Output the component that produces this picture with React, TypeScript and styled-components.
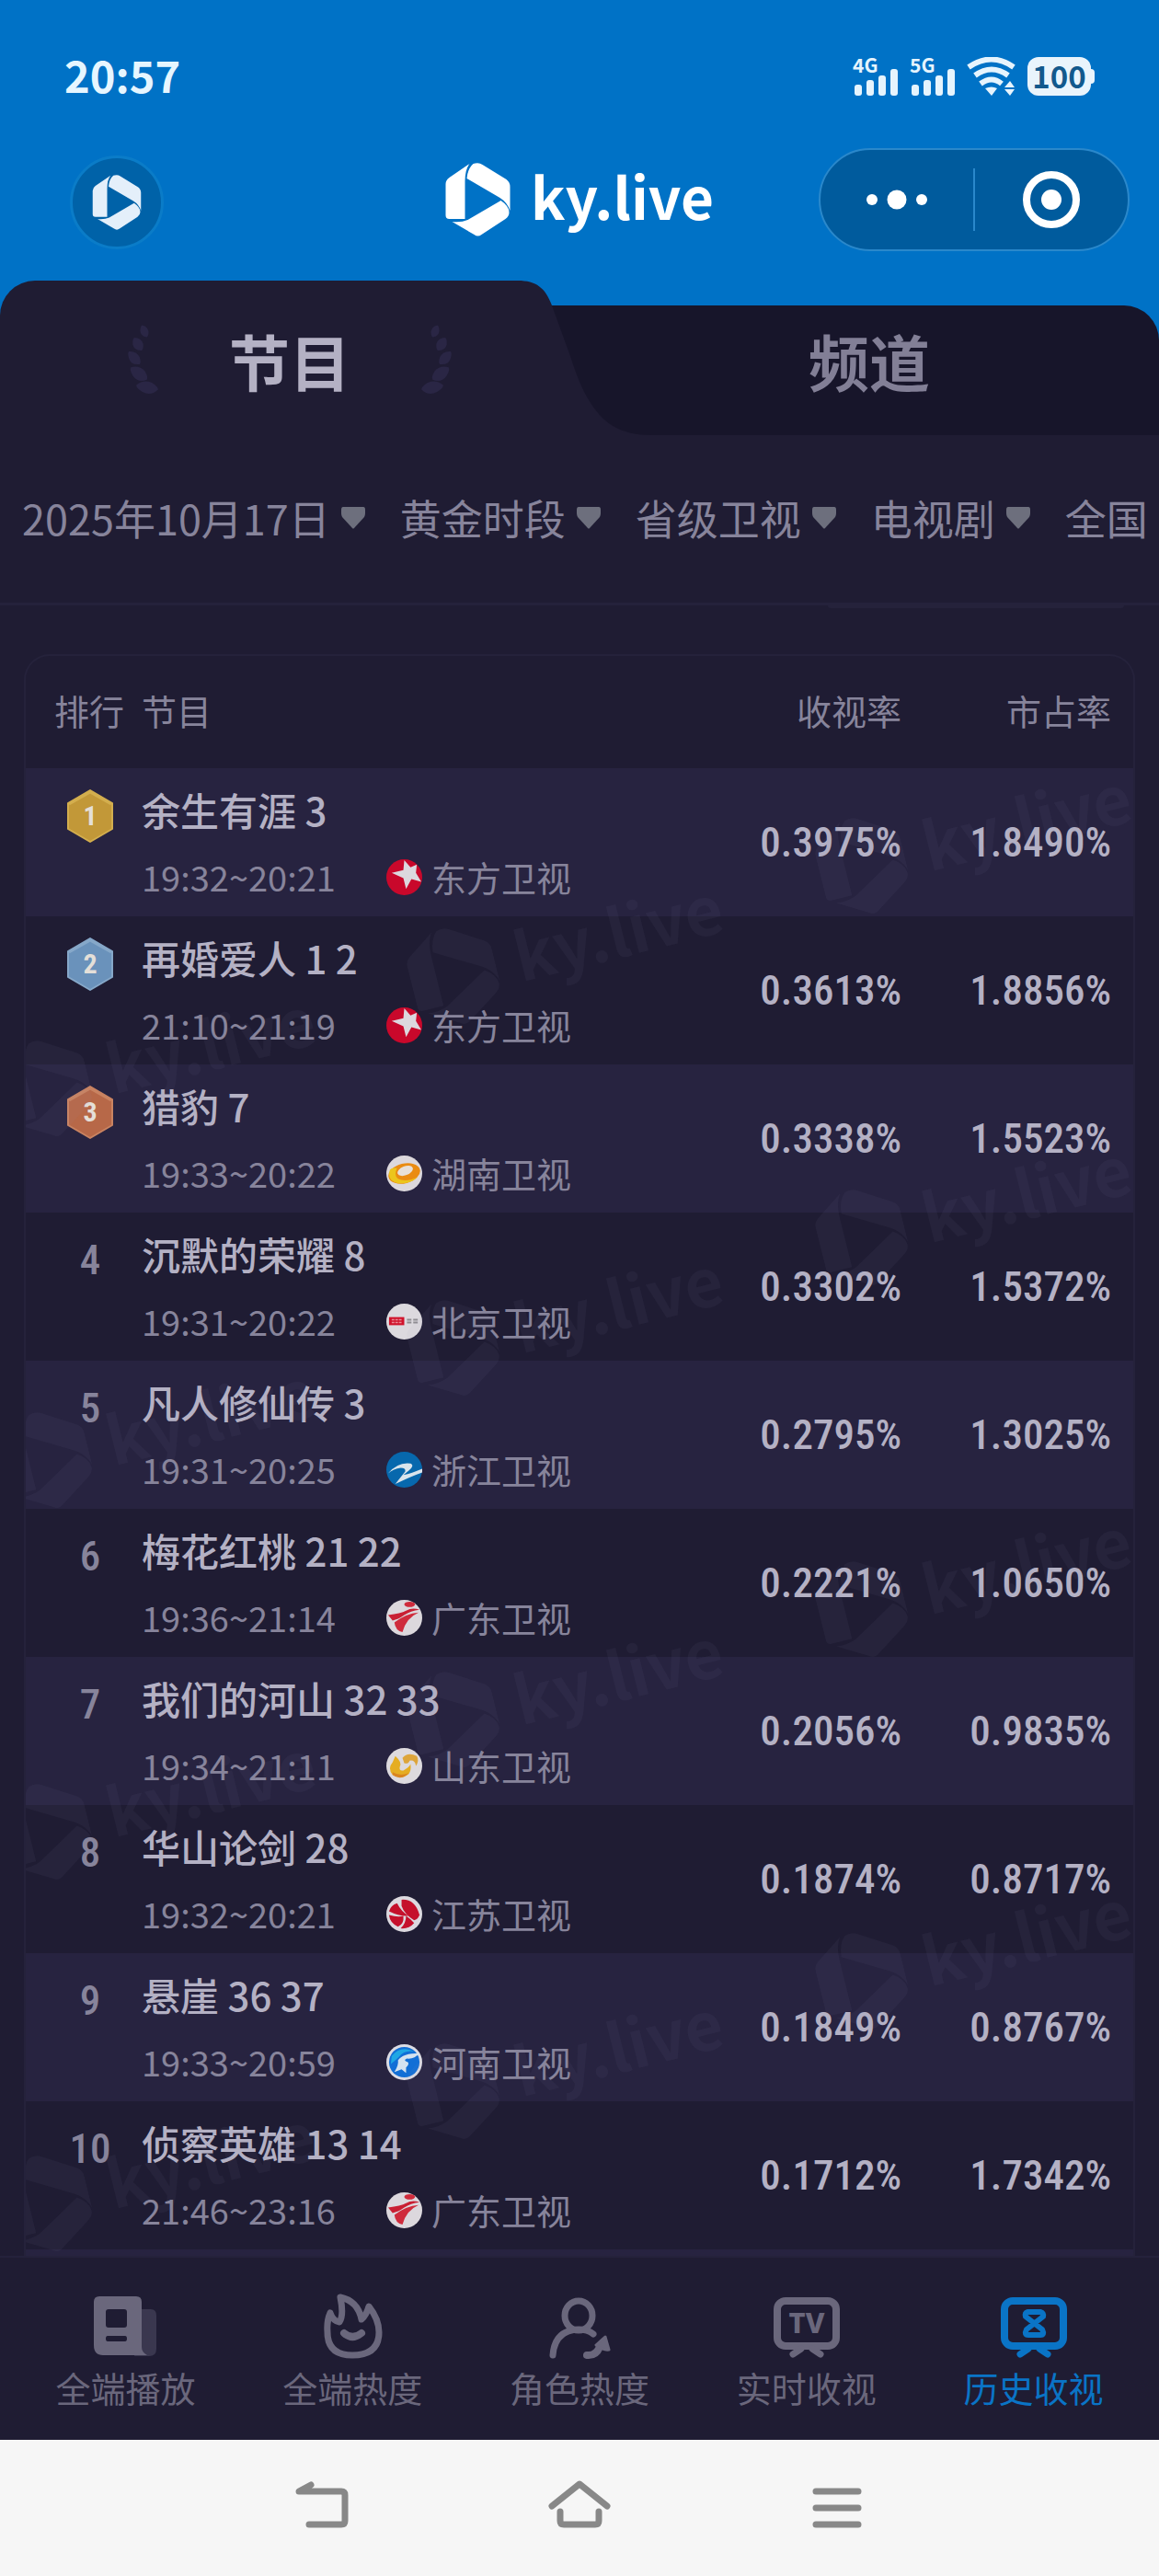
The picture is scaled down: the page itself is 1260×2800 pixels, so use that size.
import React from "react";
import styled, { createGlobalStyle, css } from "styled-components";

const c = {
  blue: "#0072c6",
  ink: "#1f1c33",
  inkDeep: "#17152a",
  stripe: "#272340",
  line: "#25223b",
  bright: "#b4b1c4",
  muted: "#87849b",
  dim: "#6a677c",
};

const sans = `"Noto Sans CJK SC", "Noto Sans", sans-serif`;
const narrow = `"Roboto Condensed", "Liberation Sans Narrow", Roboto, "Noto Sans CJK SC", sans-serif`;

const Global = createGlobalStyle`
  * { box-sizing: border-box; }
  body { margin: 0; background: ${c.ink}; font-family: ${sans}; }
  button, select { font: inherit; color: inherit; border: 0; background: none; padding: 0; margin: 0; }
  a { color: inherit; text-decoration: none; }
`;

const Page = styled.div`
  display: flex;
  flex-direction: column;
  min-height: 100vh;
  background: ${c.ink};
  overflow: hidden;
`;

const Top = styled.header`
  background: ${c.blue};
  color: #fff;
`;

const StatusBar = styled.div`
  display: flex;
  justify-content: space-between;
  align-items: center;
  height: 161px;
  padding: 4px 70px 0;
`;

const Clock = styled.time`
  padding-bottom: 4px;
  font-size: 47px;
  line-height: 56px;
  font-weight: 700;
  color: #e6f6ff;
`;

const StatusIcons = styled.div`
  display: flex;
  gap: 12px;
  color: #e6f4fd;
`;

const Signal = styled.div`
  position: relative;
  width: 50px;
  height: 42px;
`;

const SignalLabel = styled.span`
  position: absolute;
  left: 0;
  top: -4px;
  font-size: 21px;
  line-height: 24px;
  font-weight: 700;
`;

const BatteryBody = styled.div`
  display: flex;
  align-items: center;
`;

const BatteryCell = styled.span`
  width: 69px;
  height: 42px;
  border-radius: 12px;
  background: #e9f4fc;
  color: #12598d;
  font-size: 33px;
  line-height: 40px;
  font-weight: 700;
  text-align: center;
`;

const BatteryTip = styled.span`
  width: 4px;
  height: 16px;
  border-radius: 0 4px 4px 0;
  background: #e9f4fc;
`;

const TitleRow = styled.div`
  display: grid;
  grid-template-columns: 1fr auto 1fr;
  align-items: center;
  height: 144px;
  padding: 0 32px 32px;
`;

const HomeButton = styled.button`
  display: flex;
  align-items: center;
  justify-content: center;
  width: 102px;
  height: 102px;
  margin: 6px 0 0 44px;
  border: 3px solid #0a7cc8;
  border-radius: 50%;
  background: #0062a8;
  color: #e4effa;
`;

const Brand = styled.div`
  display: flex;
  align-items: center;
  gap: 22px;
  height: 112px;
`;

const BrandName = styled.h1`
  margin: 0;
  padding-bottom: 10px;
  font-size: 62px;
  line-height: 72px;
  font-weight: 700;
`;

const Capsule = styled.div`
  display: flex;
  align-items: center;
  justify-self: end;
  width: 338px;
  height: 112px;
  border: 2px solid #2a88cb;
  border-radius: 56px;
  background: #005b9d;
`;

const CapsuleButton = styled.button`
  flex: 1;
  display: flex;
  align-items: center;
  justify-content: center;
  height: 100%;
  color: #fff;
`;

const CapsuleRule = styled.span`
  width: 2px;
  height: 68px;
  background: #2a88cb;
`;

const Tabs = styled.nav`
  position: relative;
  display: grid;
  grid-template-columns: 1fr 1fr;
  height: 168px;
`;

const TabShape = styled.div`
  position: absolute;
  inset: 0;
  display: flex;
  align-items: flex-end;
`;

const TabShapeLeft = styled.span`
  flex: 0 0 calc(50% - 67px);
  height: 168px;
  border-radius: 38px 0 0 0;
  background: ${c.ink};
`;

const TabShapeRight = styled.span`
  flex: 1;
  height: 141px;
  border-radius: 0 38px 0 0;
  background: ${c.inkDeep};
`;

const Tab = styled.button<{ $active?: boolean }>`
  position: relative;
  display: flex;
  align-items: center;
  justify-content: center;
  gap: 74px;
  padding-top: 4px;
  font-size: 66px;
  line-height: 80px;
  font-weight: 700;
  color: ${(p) => (p.$active ? c.bright : "#827f96")};
`;

const Filters = styled.form`
  display: flex;
  align-items: center;
  gap: 38px;
  height: 182px;
  padding: 0 24px 2px;
  overflow: hidden;
`;

const Filter = styled.label`
  display: flex;
  flex: none;
  align-items: center;
  gap: 12px;
  color: ${c.muted};
`;

const FilterSelect = styled.select`
  appearance: none;
  field-sizing: content;
  font-size: 45px;
  line-height: 60px;
  outline: none;
`;

const Divider = styled.hr`
  width: 100%;
  height: 3px;
  margin: 0;
  border: 0;
  background: ${c.line};
`;

const PanelEdge = styled.div`
  align-self: flex-end;
  width: 322px;
  height: 3px;
  margin-right: 38px;
  border-radius: 0 0 3px 3px;
  background: ${c.line};
`;

const Card = styled.section`
  position: relative;
  margin: 50px 26px 0;
  border: 2px solid ${c.line};
  border-bottom: 0;
  border-radius: 28px 28px 0 0;
  overflow: hidden;
`;

const Table = styled.table`
  width: 100%;
  table-layout: fixed;
  border-collapse: collapse;
`;

const Head = styled.th<{ $align?: string; $w?: number }>`
  height: 122px;
  width: ${(p) => (p.$w ? p.$w + "px" : "auto")};
  padding: 0 0 4px;
  text-align: ${(p) => p.$align || "left"};
  font-size: 38px;
  line-height: 52px;
  font-weight: 400;
  color: ${c.muted};
  &:first-child { padding-left: 12px; }
  &:last-child { padding-right: 24px; }
`;

const Row = styled.tr`
  height: 161px;
  background: ${c.ink};
  &:nth-child(odd) { background: ${c.stripe}; }
`;

const RankCell = styled.td`
  padding: 23px 0 0 14px;
  vertical-align: top;
`;

const Rank = styled.span`
  display: flex;
  align-items: center;
  justify-content: center;
  height: 58px;
  font-family: ${narrow};
  font-size: 45px;
  line-height: 52px;
  font-weight: 500;
  color: ${c.muted};
`;

const Medal = styled.span`
  display: grid;
  place-items: center;
  height: 58px;
  & > * { grid-area: 1 / 1; }
`;

const MedalNumber = styled.span`
  font-family: ${narrow};
  font-size: 30px;
  line-height: 32px;
  font-weight: 700;
  color: #e4dfd8;
`;

const ProgramCell = styled.td`
  padding: 19px 0 0;
  vertical-align: top;
`;

const ProgramName = styled.div`
  font-size: 42px;
  line-height: 52px;
  font-weight: 500;
  color: ${c.bright};
`;

const Meta = styled.div`
  display: flex;
  align-items: center;
  margin-top: 21px;
  font-size: 38px;
  line-height: 52px;
  color: ${c.muted};
`;

const Slot = styled.span`
  width: 266px;
`;

const Channel = styled.span`
  display: flex;
  align-items: center;
  gap: 10px;
`;

const Figure = styled.td<{ $last?: boolean }>`
  padding: 0 ${(p) => (p.$last ? 24 : 0)}px 0 0;
  text-align: right;
  font-family: ${narrow};
  font-size: 45px;
  line-height: 56px;
  font-weight: 500;
  color: ${c.bright};
`;

const Peek = styled.div`
  height: 7px;
  background: ${c.stripe};
`;

const Marks = styled.div`
  position: absolute;
  inset: 122px 0 0;
  overflow: hidden;
  pointer-events: none;
`;

const MarkColumn = styled.div<{ $x: number; $y: number }>`
  position: absolute;
  left: ${(p) => p.$x}px;
  top: ${(p) => p.$y}px;
  display: flex;
  flex-direction: column;
  gap: 292px;
`;

const Mark = styled.div`
  display: flex;
  align-items: center;
  gap: 22px;
  width: 344px;
  height: 112px;
  transform: rotate(-14deg);
  color: rgba(150, 160, 190, 0.06);
`;

const MarkText = styled.span`
  padding-bottom: 14px;
  font-size: 72px;
  line-height: 80px;
  font-weight: 700;
`;

const BottomNav = styled.nav`
  display: grid;
  grid-template-columns: repeat(5, 1fr);
  height: 200px;
  padding: 39px 13px 0;
  border-top: 2px solid ${c.line};
`;

const NavLink = styled.a<{ $active?: boolean }>`
  display: flex;
  flex-direction: column;
  align-items: center;
  gap: 6px;
  font-size: 38px;
  line-height: 48px;
  color: ${(p) => (p.$active ? "#0a74c6" : c.dim)};
`;

const SystemBar = styled.footer`
  display: flex;
  justify-content: center;
  gap: 208px;
  flex: 1;
  min-height: 147px;
  padding-top: 35px;
  background: #f6f6f6;
`;

const SystemButton = styled.button`
  width: 72px;
  height: 72px;
  color: #888;
`;

const block = css`
  display: block;
  flex: none;
`;
const Svg = styled.svg`
  ${block}
`;

function KyLogo({ w, h }: { w: number; h: number }) {
  return (
    <Svg width={w} height={h} viewBox="0 0 70 80" fill="currentColor" aria-hidden="true">
      <path d="M26 1 L4 16 Q0 19 0 23 V57 Q0 61 4 61 L21 61 V20 Q21 7 26 1Z" />
      <path d="M30 1 Q36 -1 40 2 L66 18 Q70 21 70 26 V52 Q67 43 59 38 L23 17 Q24 6 30 1Z" />
      <path d="M60 41 Q69 47 69 54 Q69 58 65 61 L39 78 Q35 81 31 78 L7 64 Q17 65 24 62Z" />
    </Svg>
  );
}

function SignalMeter({ label }: { label: string }) {
  return (
    <Signal>
      <SignalLabel>{label}</SignalLabel>
      <Svg width="50" height="42" viewBox="0 0 50 42" fill="currentColor" aria-hidden="true">
        <rect x="2" y="30" width="8" height="12" rx="3" />
        <rect x="15" y="25" width="8" height="17" rx="3" />
        <rect x="28" y="20" width="8" height="22" rx="3" />
        <rect x="41" y="13" width="8" height="29" rx="3" />
      </Svg>
    </Signal>
  );
}

function Laurel({ flip }: { flip?: boolean }) {
  const leaves = [
    [18, 8, 70, 7, 4],
    [11, 22, 60, 8, 5],
    [7, 37, 50, 9, 5],
    [12, 54, 38, 11, 6],
    [21, 69, 12, 12, 6],
  ];
  return (
    <Svg width="36" height="78" viewBox="0 0 36 78" fill="#2a2645" aria-hidden="true">
      <g transform={flip ? "translate(36 0) scale(-1 1)" : undefined}>
        {leaves.map(([x, y, r, a, b]) => (
          <path
            key={y}
            transform={`translate(${x} ${y}) rotate(${r})`}
            d={`M${-a} 0 Q${-a / 2} ${-b * 1.3} ${a / 3} ${-b} Q${a} ${-b / 2} ${a} 0 Q${a / 2} ${b * 1.5} ${-a / 3} ${b} Q${-a} ${b / 2} ${-a} 0Z`}
          />
        ))}
      </g>
    </Svg>
  );
}

const medalColors = [
  ["#c29838", "#d3ae4e"],
  ["#6a92bb", "#86a8c9"],
  ["#b76848", "#c98361"],
];

function RankBadge({ n }: { n: number }) {
  if (n > 3) return <Rank>{n}</Rank>;
  const [fill, edge] = medalColors[n - 1];
  return (
    <Medal>
      <Svg width="50" height="58" viewBox="0 0 50 58" aria-hidden="true">
        <path d="M25 1 L49 15 V43 L25 57 L1 43 V15Z" fill={fill} stroke={edge} strokeWidth="2" strokeLinejoin="round" />
        <path d="M2 16 L25 3 L48 16" fill="none" stroke={edge} strokeWidth="3" />
      </Svg>
      <MedalNumber>{n}</MedalNumber>
    </Medal>
  );
}

function ChannelLogo({ name }: { name: string }) {
  const art: Record<string, React.ReactNode> = {
    东方卫视: (
      <>
        <circle cx="20" cy="20" r="20" fill="#c9082b" />
        <path d="M20 1 L27 9 L34 6 L33 15 L39 25 L28 22 L22 33 L19 21 L6 15 L19 12Z" fill="#dcd8de" />
      </>
    ),
    湖南卫视: (
      <>
        <circle cx="20" cy="20" r="20" fill="#dcd8dc" />
        <ellipse cx="20" cy="20" rx="18" ry="11" transform="rotate(-14 20 20)" fill="#ea8c12" />
        <path d="M4 16 Q0 28 13 31 Q26 32 35 24 Q22 30 13 26 Q8 22 12 14 Q6 13 4 16Z" fill="#ecc51c" />
        <ellipse cx="21" cy="17" rx="9" ry="5" transform="rotate(-22 21 17)" fill="#e8e0d8" />
      </>
    ),
    北京卫视: (
      <>
        <circle cx="20" cy="20" r="20" fill="#dcd9de" />
        <rect x="3" y="15" width="17" height="9" fill="#d0132c" />
        <path d="M6 18 H17 M6 21 H17" stroke="#e88994" strokeWidth="1.5" strokeDasharray="3 1" />
        <path d="M23 18 H36 M23 21 H36" stroke="#8f8d92" strokeWidth="2" strokeDasharray="5 2" />
      </>
    ),
    浙江卫视: (
      <>
        <circle cx="20" cy="20" r="20" fill="#0768ad" />
        <path d="M2 24 Q13 11 27 13 Q32 15 25 21 L19 26 Q28 24 40 19 L40 23 Q26 28 10 36 L21 22 Q22 18 16 18 Q8 19 2 24Z" fill="#d9e4ec" />
      </>
    ),
    广东卫视: (
      <>
        <circle cx="20" cy="20" r="20" fill="#dcd8dd" />
        <ellipse cx="26" cy="5" rx="6" ry="3" fill="#cf2b3c" />
        <path d="M2 17 Q16 15 22 12 Q29 8 37 11 Q27 12 20 17 Q13 22 7 23Z" fill="#c91f33" />
        <path d="M9 25 Q22 15 36 14 Q22 20 18 36 Q10 34 9 25Z" fill="#cf2b3c" />
      </>
    ),
    山东卫视: (
      <>
        <circle cx="20" cy="20" r="20" fill="#dddade" />
        <path d="M10 9 Q18 16 15 21 Q14 26 19 25 Q25 22 27 18 Q28 25 25 29 Q17 36 7 30 Q1 23 7 16Z" fill="#e5ad22" />
        <path d="M18 11 Q24 4 34 9 Q37 14 33 20 Q32 13 26 14 Q25 18 20 17Z" fill="#dda53a" />
        <path d="M7 27 Q15 32 25 28 Q16 37 7 30Z" fill="#d98420" />
      </>
    ),
    江苏卫视: (
      <>
        <circle cx="20" cy="20" r="20" fill="#dcd9df" />
        <path d="M17 4 Q32 3 37 21 Q35 26 31 27 Q20 20 17 11Z" fill="#c5102b" />
        <path d="M12 8 Q17 18 25 22 Q15 23 3 17 Q5 10 12 8Z" fill="#c5102b" />
        <path d="M3 21 Q13 24 19 22 Q20 31 13 34 Q4 30 3 21Z" fill="#c5102b" />
        <path d="M22 22 Q28 26 31 30 Q25 37 16 36 Q22 30 22 22Z" fill="#c5102b" />
      </>
    ),
    河南卫视: (
      <>
        <circle cx="20" cy="20" r="20" fill="#dcdce4" />
        <circle cx="20" cy="20" r="17" fill="#126fd6" />
        <path d="M6 13 Q16 1 31 8 Q20 6 14 14 Q9 19 5 22Z" fill="#1fa7e4" />
        <path d="M9 31 Q14 23 13 18 Q18 10 37 10 Q31 17 23 16 Q18 18 24 20 Q26 22 22 26 V32 L17 28Z" fill="#d5e3f0" />
      </>
    ),
  };
  return (
    <Svg width="39" height="39" viewBox="0 0 40 40" aria-hidden="true">
      {art[name]}
    </Svg>
  );
}

const stroke = { fill: "none", stroke: "currentColor", strokeLinecap: "round", strokeLinejoin: "round" } as const;

const navIcons: Record<string, React.ReactNode> = {
  全端播放: (
    <>
      <path d="M52 17 H64 Q70 17 70 24 V60 Q70 68 62 68 H46Z" fill="#3a374f" />
      <path fillRule="evenodd" fill="currentColor" d="M8 3 H48 Q54 3 54 9 V58 Q54 64 60 67 H12 Q2 67 2 56 V9 Q2 3 8 3Z M18 17 Q15 17 15 20 V34 Q15 37 18 37 H35 Q38 37 38 34 V20 Q38 17 35 17Z M17 46 Q15 46 15 49 Q15 52 17 52 H36 Q38 52 38 49 Q38 46 36 46Z" />
    </>
  ),
  全端热度: (
    <g {...stroke}>
      <path strokeWidth="7" d="M12 21 Q15 30 22 31 Q27 24 23 4 Q42 8 46 28 Q51 24 54 14 Q65 28 65 42 Q65 67 36 67 Q9 67 9 42 Q8 30 12 21Z" />
      <path strokeWidth="8" d="M27 43 Q36 51 46 43" />
    </g>
  ),
  角色热度: (
    <>
      <g {...stroke} strokeWidth="7">
        <ellipse cx="35" cy="24" rx="15" ry="16" />
        <path d="M7 67 Q9 40 35 39 Q45 39 51 44" />
        <path strokeWidth="8" d="M44 67 Q54 68 58 58" />
      </g>
      <path d="M64 47 L68 61 Q62 62 54 56Z" fill="currentColor" stroke="currentColor" strokeWidth="3" strokeLinejoin="round" />
    </>
  ),
  实时收视: (
    <>
      <g {...stroke} strokeWidth="8">
        <rect x="4" y="8" width="64" height="49" rx="9" />
        <path d="M30 60 L21 66 M42 60 L51 66" strokeWidth="7" />
      </g>
      <text x="36" y="43" textAnchor="middle" fontFamily="Noto Sans, sans-serif" fontWeight="800" fontSize="31" fill="currentColor">
        TV
      </text>
    </>
  ),
  历史收视: (
    <g {...stroke} strokeWidth="8">
      <rect x="4" y="8" width="64" height="49" rx="9" />
      <path d="M30 60 L21 66 M42 60 L51 66" strokeWidth="7" />
      <path strokeWidth="6" d="M29 20 H43 Q47 21 46 25 L28 39 Q25 45 30 45 H43 Q48 45 45 39 L27 25 Q26 21 29 20Z" />
    </g>
  ),
};

const filters = ["2025年10月17日", "黄金时段", "省级卫视", "电视剧", "全国"];

const programs = [
  ["余生有涯 3", "19:32~20:21", "东方卫视", "0.3975%", "1.8490%"],
  ["再婚爱人 1 2", "21:10~21:19", "东方卫视", "0.3613%", "1.8856%"],
  ["猎豹 7", "19:33~20:22", "湖南卫视", "0.3338%", "1.5523%"],
  ["沉默的荣耀 8", "19:31~20:22", "北京卫视", "0.3302%", "1.5372%"],
  ["凡人修仙传 3", "19:31~20:25", "浙江卫视", "0.2795%", "1.3025%"],
  ["梅花红桃 21 22", "19:36~21:14", "广东卫视", "0.2221%", "1.0650%"],
  ["我们的河山 32 33", "19:34~21:11", "山东卫视", "0.2056%", "0.9835%"],
  ["华山论剑 28", "19:32~20:21", "江苏卫视", "0.1874%", "0.8717%"],
  ["悬崖 36 37", "19:33~20:59", "河南卫视", "0.1849%", "0.8767%"],
  ["侦察英雄 13 14", "21:46~23:16", "广东卫视", "0.1712%", "1.7342%"],
];

const markColumns = [
  [-28, 262],
  [415, 140],
  [859, 20],
];

export default function App() {
  return (
    <Page>
      <Global />
      <Top>
        <StatusBar>
          <Clock>20:57</Clock>
          <StatusIcons>
            <SignalMeter label="4G" />
            <SignalMeter label="5G" />
            <Svg width="54" height="42" viewBox="0 0 54 42" aria-hidden="true">
              <g {...stroke} strokeLinecap="butt" strokeWidth="6">
                <path d="M2 11 Q27 -6 51 11" />
                <path d="M9 20 Q27 7 45 20" />
                <path d="M15 29 Q27 20 38 29" />
              </g>
              <path d="M27 42 L20 34 Q27 31 33 34Z M47 26 L52 33 H41Z M47 42 L52 35 H41Z" fill="currentColor" />
            </Svg>
            <BatteryBody>
              <BatteryCell>100</BatteryCell>
              <BatteryTip />
            </BatteryBody>
          </StatusIcons>
        </StatusBar>
        <TitleRow>
          <HomeButton aria-label="ky">
            <KyLogo w={54} h={60} />
          </HomeButton>
          <Brand>
            <KyLogo w={71} h={80} />
            <BrandName>ky.live</BrandName>
          </Brand>
          <Capsule>
            <CapsuleButton aria-label="更多">
              <Svg width="66" height="22" viewBox="0 0 66 22" fill="currentColor">
                <circle cx="6" cy="11" r="6" />
                <circle cx="33" cy="11" r="10.5" />
                <circle cx="60" cy="11" r="6" />
              </Svg>
            </CapsuleButton>
            <CapsuleRule />
            <CapsuleButton aria-label="关闭">
              <Svg width="62" height="62" viewBox="0 0 62 62" fill="currentColor">
                <circle cx="31" cy="31" r="27" fill="none" stroke="currentColor" strokeWidth="8" />
                <circle cx="31" cy="31" r="11" />
              </Svg>
            </CapsuleButton>
          </Capsule>
        </TitleRow>
        <Tabs>
          <TabShape>
            <TabShapeLeft />
            <Svg width="146" height="168" viewBox="0 0 146 168" aria-hidden="true">
              <path d="M0 27 H146 V168 H0Z" fill={c.inkDeep} />
              <path d="M0 0 C20 0 30 8 37 27 L57 82 C64 104 70 118 76 128 C92 156 112 168 146 168 H0Z" fill={c.ink} />
            </Svg>
            <TabShapeRight />
          </TabShape>
          <Tab $active>
            <Laurel />
            节目
            <Laurel flip />
          </Tab>
          <Tab>频道</Tab>
        </Tabs>
      </Top>

      <Filters>
        {filters.map((f) => (
          <Filter key={f}>
            <FilterSelect aria-label={f}>
              <option>{f}</option>
            </FilterSelect>
            <Svg width="26" height="24" viewBox="0 0 26 24" aria-hidden="true">
              <path d="M2 0 H24 Q26 0 26 3 V7 Q26 9 25 11 L14 23 Q13 24 12 23 L1 11 Q0 9 0 7 V3 Q0 0 2 0Z" fill="#6d6f7d" />
            </Svg>
          </Filter>
        ))}
      </Filters>
      <Divider />
      <PanelEdge />

      <Card>
        <Table>
          <thead>
            <tr>
              <Head $w={126} $align="center">排行</Head>
              <Head>节目</Head>
              <Head $w={252} $align="right">收视率</Head>
              <Head $w={252} $align="right">市占率</Head>
            </tr>
          </thead>
          <tbody>
            {programs.map(([name, time, channel, rate, share], i) => (
              <Row key={name}>
                <RankCell>
                  <RankBadge n={i + 1} />
                </RankCell>
                <ProgramCell>
                  <ProgramName>{name}</ProgramName>
                  <Meta>
                    <Slot>{time}</Slot>
                    <Channel>
                      <ChannelLogo name={channel} />
                      {channel}
                    </Channel>
                  </Meta>
                </ProgramCell>
                <Figure>{rate}</Figure>
                <Figure $last>{share}</Figure>
              </Row>
            ))}
          </tbody>
        </Table>
        <Peek />
        <Marks aria-hidden="true">
          {markColumns.map(([x, y]) => (
            <MarkColumn key={x} $x={x} $y={y}>
              {[0, 1, 2, 3].map((n) => (
                <Mark key={n}>
                  <KyLogo w={94} h={108} />
                  <MarkText>ky.live</MarkText>
                </Mark>
              ))}
            </MarkColumn>
          ))}
        </Marks>
      </Card>

      <BottomNav>
        {Object.keys(navIcons).map((label) => {
          const active = label === "历史收视";
          return (
            <NavLink key={label} href="#" $active={active} aria-current={active ? "page" : undefined}>
              <Svg width="72" height="72" viewBox="0 0 72 72" aria-hidden="true">
                {navIcons[label]}
              </Svg>
              {label}
            </NavLink>
          );
        })}
      </BottomNav>

      <SystemBar>
        <SystemButton aria-label="返回">
          <Svg width="72" height="72" viewBox="0 0 72 72" {...stroke} strokeWidth="7">
            <path d="M22 57 H57 Q61 57 61 53 V25 Q61 21 57 21 H11 L24 14" />
          </Svg>
        </SystemButton>
        <SystemButton aria-label="主页">
          <Svg width="72" height="72" viewBox="0 0 72 72" {...stroke} strokeWidth="7">
            <path d="M6 37 L36 13 L66 37 M15 43 V53 Q15 57 19 57 H53 Q57 57 57 53 V43" />
          </Svg>
        </SystemButton>
        <SystemButton aria-label="最近任务">
          <Svg width="72" height="72" viewBox="0 0 72 72" {...stroke} strokeWidth="7">
            <path d="M13 21 H59 M13 39 H59 M13 57 H59" />
          </Svg>
        </SystemButton>
      </SystemBar>
    </Page>
  );
}
